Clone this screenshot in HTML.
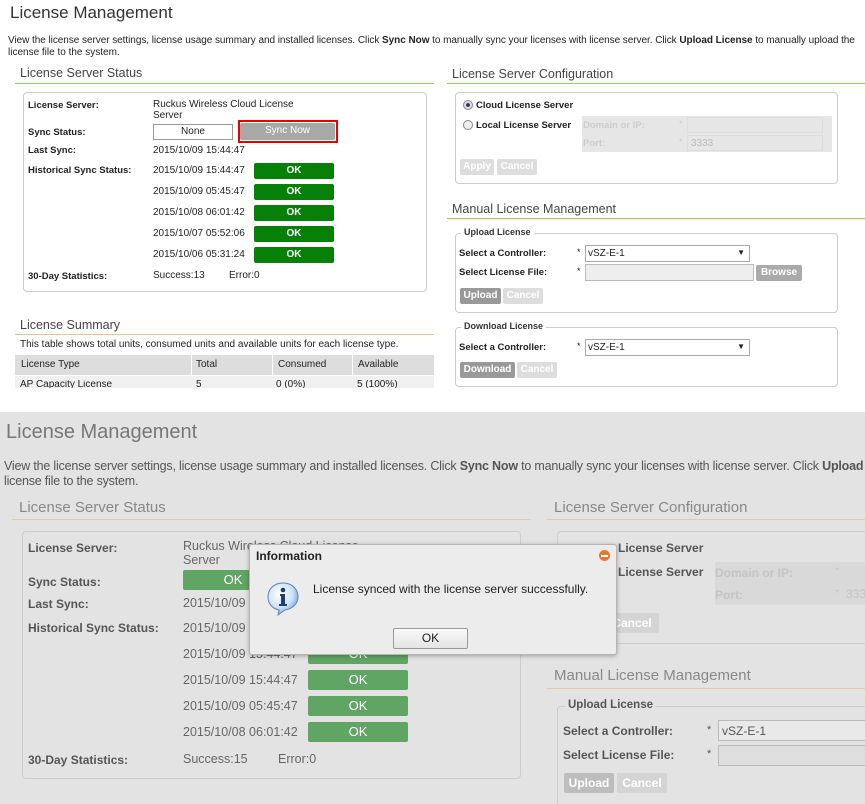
<!DOCTYPE html>
<html><head><meta charset="utf-8"><style>
*{margin:0;padding:0;box-sizing:border-box}
body{width:865px;height:804px;overflow:hidden;background:#fff;font-family:"Liberation Sans",sans-serif;color:#222;position:relative}
.a{position:absolute;white-space:nowrap;line-height:1}
.b{font-weight:bold}
.ok{position:absolute;background:#078007;color:#fff;font-size:10px;font-weight:bold;text-align:center;border-radius:2px}
.btn{position:absolute;color:#fff;font-size:10px;font-weight:bold;text-align:center;border-radius:2px;line-height:16px}
#bot{position:absolute;left:0;top:412px;width:865px;height:392px;background:#e3e3e3;overflow:hidden;color:#444}
#bot .ok{background:#60a563;font-size:13px;font-weight:normal;line-height:20px;height:20px;width:100px}
</style></head><body>
<!-- TOP -->
<div class="a" style="left:10px;top:4px;font-size:17px;color:#333">License Management</div>
<div class="a" style="left:8px;top:36px;font-size:10px;letter-spacing:-0.05px;color:#222">View the license server settings, license usage summary and installed licenses. Click <b>Sync Now</b> to manually sync your licenses with license server. Click <b>Upload License</b> to manually upload the</div>
<div class="a" style="left:8px;top:48px;font-size:10px">license file to the system.</div>

<div class="a" style="left:20px;top:67px;font-size:12.5px;color:#444">License Server Status</div>
<div class="a" style="left:15px;top:83px;width:419px;height:1px;background:#f0a050"></div>
<div class="a" style="left:23px;top:92px;width:404px;height:200px;border:1px solid #ccc;border-radius:4px"></div>
<div class="a b" style="left:28px;top:101px;font-size:9.5px">License Server:</div>
<div class="a" style="left:153px;top:100px;font-size:10px">Ruckus Wireless Cloud License</div>
<div class="a" style="left:153px;top:111px;font-size:10px">Server</div>
<div class="a b" style="left:28px;top:128px;font-size:9.5px">Sync Status:</div>
<div class="a" style="left:153px;top:124px;width:80px;height:16px;border:1px solid #999;font-size:10px;text-align:center;line-height:14px">None</div>
<div class="a" style="left:238px;top:120px;width:100px;height:23px;border:2px solid #e00"></div>
<div class="btn" style="left:240px;top:123px;width:95px;height:17px;background:#a8a8a8;font-weight:normal">Sync Now</div>
<div class="a b" style="left:28px;top:146px;font-size:9.5px">Last Sync:</div>
<div class="a" style="left:153px;top:146px;font-size:10px">2015/10/09 15:44:47</div>
<div class="a b" style="left:28px;top:166px;font-size:9.5px">Historical Sync Status:</div>
<div class="a" style="left:153px;top:166px;font-size:10px">2015/10/09 15:44:47</div>
<div class="a" style="left:153px;top:187px;font-size:10px">2015/10/09 05:45:47</div>
<div class="a" style="left:153px;top:208px;font-size:10px">2015/10/08 06:01:42</div>
<div class="a" style="left:153px;top:229px;font-size:10px">2015/10/07 05:52:06</div>
<div class="a" style="left:153px;top:250px;font-size:10px">2015/10/06 05:31:24</div>
<div class="ok" style="left:254px;top:163px;width:80px;height:16px;line-height:16px">OK</div>
<div class="ok" style="left:254px;top:184px;width:80px;height:16px;line-height:16px">OK</div>
<div class="ok" style="left:254px;top:205px;width:80px;height:16px;line-height:16px">OK</div>
<div class="ok" style="left:254px;top:226px;width:80px;height:16px;line-height:16px">OK</div>
<div class="ok" style="left:254px;top:247px;width:80px;height:16px;line-height:16px">OK</div>
<div class="a b" style="left:28px;top:272px;font-size:9.5px">30-Day Statistics:</div>
<div class="a" style="left:153px;top:271px;font-size:10px">Success:13</div>
<div class="a" style="left:229px;top:271px;font-size:10px">Error:0</div>

<div class="a" style="left:20px;top:319px;font-size:12.5px;color:#444">License Summary</div>
<div class="a" style="left:15px;top:334px;width:419px;height:1px;background:#f5c080"></div>
<div class="a" style="left:20px;top:340px;font-size:10px">This table shows total units, consumed units and available units for each license type.</div>
<div class="a" style="left:15px;top:355px;width:419px;height:20px;background:#ddd"></div>
<div class="a" style="left:15px;top:376px;width:419px;height:12px;background:#f0f0f0;overflow:hidden"></div>
<div class="a" style="left:191px;top:355px;width:1px;height:20px;background:#fff"></div>
<div class="a" style="left:272px;top:355px;width:1px;height:20px;background:#fff"></div>
<div class="a" style="left:352px;top:355px;width:1px;height:20px;background:#fff"></div>
<div class="a" style="left:21px;top:360px;font-size:10px">License Type</div>
<div class="a" style="left:196px;top:360px;font-size:10px">Total</div>
<div class="a" style="left:278px;top:360px;font-size:10px">Consumed</div>
<div class="a" style="left:358px;top:360px;font-size:10px">Available</div>
<div class="a" style="left:20px;top:380px;font-size:10px;height:8px;overflow:hidden">AP Capacity License</div>
<div class="a" style="left:196px;top:380px;font-size:10px;height:8px;overflow:hidden">5</div>
<div class="a" style="left:276px;top:380px;font-size:10px;height:8px;overflow:hidden">0 (0%)</div>
<div class="a" style="left:357px;top:380px;font-size:10px;height:8px;overflow:hidden">5 (100%)</div>

<!-- right top -->
<div class="a" style="left:452px;top:68px;font-size:12.5px;color:#444">License Server Configuration</div>
<div class="a" style="left:447px;top:83px;width:418px;height:1px;background:#f0a050"></div>
<div class="a" style="left:455px;top:92px;width:383px;height:92px;border:1px solid #ccc;border-radius:4px"></div>
<div class="a" style="left:463px;top:100px;width:10px;height:10px;border-radius:50%;border:1px solid #888;background:radial-gradient(#335 30%,#dde 40%)"></div>
<div class="a b" style="left:476px;top:101px;font-size:9.5px">Cloud License Server</div>
<div class="a" style="left:463px;top:120px;width:10px;height:10px;border-radius:50%;border:1px solid #888;background:#eee"></div>
<div class="a b" style="left:476px;top:121px;font-size:9.5px">Local License Server</div>
<div class="a" style="left:582px;top:116px;width:250px;height:36px;background:#e6e6e6"></div>
<div class="a b" style="left:583px;top:121px;font-size:9.5px;color:#ccc">Domain or IP:</div>
<div class="a b" style="left:583px;top:139px;font-size:9.5px;color:#ccc">Port:</div>
<div class="a" style="left:679px;top:120px;font-size:9px;color:#ccc">*</div>
<div class="a" style="left:679px;top:138px;font-size:9px;color:#ccc">*</div>
<div class="a" style="left:687px;top:117px;width:136px;height:16px;border:1px solid #ddd"></div>
<div class="a" style="left:687px;top:135px;width:136px;height:16px;border:1px solid #ddd;font-size:10px;color:#bbb;padding:3px 3px">3333</div>
<div class="btn" style="left:460px;top:159px;width:34px;height:16px;background:#ddd">Apply</div>
<div class="btn" style="left:497px;top:159px;width:40px;height:16px;background:#ddd">Cancel</div>

<div class="a" style="left:452px;top:203px;font-size:12.5px;color:#444">Manual License Management</div>
<div class="a" style="left:447px;top:218px;width:418px;height:1px;background:#f0a050"></div>
<div class="a" style="left:455px;top:233px;width:383px;height:80px;border:1px solid #ccc;border-radius:4px"></div>
<div class="a b" style="left:461px;top:228px;font-size:9px;background:#fff;padding:0 3px;color:#333">Upload License</div>
<div class="a b" style="left:459px;top:249px;font-size:9.5px">Select a Controller:</div>
<div class="a" style="left:577px;top:248px;font-size:9px">*</div>
<div class="a" style="left:585px;top:245px;width:165px;height:17px;border:1px solid #aaa;font-size:10px;padding:3px 2px">vSZ-E-1<span style="position:absolute;right:4px;top:3px;font-size:8px">▼</span></div>
<div class="a b" style="left:459px;top:268px;font-size:9.5px">Select License File:</div>
<div class="a" style="left:577px;top:267px;font-size:9px">*</div>
<div class="a" style="left:585px;top:264px;width:169px;height:17px;border:1px solid #bbb;background:#eee"></div>
<div class="btn" style="left:756px;top:265px;width:46px;height:16px;background:#aaa">Browse</div>
<div class="btn" style="left:460px;top:288px;width:41px;height:16px;background:#999">Upload</div>
<div class="btn" style="left:503px;top:288px;width:40px;height:16px;background:#ddd">Cancel</div>

<div class="a" style="left:455px;top:327px;width:383px;height:60px;border:1px solid #ccc;border-radius:4px"></div>
<div class="a b" style="left:461px;top:322px;font-size:9px;background:#fff;padding:0 3px;color:#333">Download License</div>
<div class="a b" style="left:459px;top:343px;font-size:9.5px">Select a Controller:</div>
<div class="a" style="left:577px;top:342px;font-size:9px">*</div>
<div class="a" style="left:585px;top:339px;width:165px;height:17px;border:1px solid #aaa;font-size:10px;padding:3px 2px">vSZ-E-1<span style="position:absolute;right:4px;top:3px;font-size:8px">▼</span></div>
<div class="btn" style="left:460px;top:362px;width:55px;height:16px;background:#999">Download</div>
<div class="btn" style="left:517px;top:362px;width:40px;height:16px;background:#ddd">Cancel</div>

<!-- BOTTOM -->
<div id="bot">
<div class="a" style="left:6px;top:10px;font-size:20px;color:#777">License Management</div>
<div class="a" style="left:4px;top:48px;font-size:12.5px;letter-spacing:-0.2px;color:#555">View the license server settings, license usage summary and installed licenses. Click <b>Sync Now</b> to manually sync your licenses with license server. Click <b>Upload</b></div>
<div class="a" style="left:4px;top:63px;font-size:12.5px;letter-spacing:-0.2px;color:#555">license file to the system.</div>
<div class="a" style="left:19px;top:88px;font-size:15px;color:#888">License Server Status</div>
<div class="a" style="left:12px;top:107px;width:519px;height:1px;background:#e8c9a0"></div>
<div class="a" style="left:22px;top:119px;width:499px;height:248px;border:1px solid #ccc;border-radius:4px"></div>
<div class="a b" style="left:28px;top:130px;font-size:12px;color:#555">License Server:</div>
<div class="a" style="left:183px;top:128px;font-size:12.5px;color:#666">Ruckus Wireless Cloud License</div>
<div class="a" style="left:183px;top:142px;font-size:12.5px;color:#666">Server</div>
<div class="a b" style="left:28px;top:164px;font-size:12px;color:#555">Sync Status:</div>
<div class="ok" style="left:183px;top:158px">OK</div>
<div class="a b" style="left:28px;top:186px;font-size:12px;color:#555">Last Sync:</div>
<div class="a" style="left:183px;top:185px;font-size:12.5px;color:#666">2015/10/09 15:44:47</div>
<div class="a b" style="left:28px;top:210px;font-size:12px;color:#555">Historical Sync Status:</div>
<div class="a" style="left:183px;top:210px;font-size:12.5px;color:#666">2015/10/09 15:44:47</div>
<div class="a" style="left:183px;top:236px;font-size:12.5px;color:#666">2015/10/09 15:44:47</div>
<div class="ok" style="left:308px;top:232px">OK</div>
<div class="a" style="left:183px;top:262px;font-size:12.5px;color:#666">2015/10/09 15:44:47</div>
<div class="ok" style="left:308px;top:258px">OK</div>
<div class="a" style="left:183px;top:288px;font-size:12.5px;color:#666">2015/10/09 05:45:47</div>
<div class="ok" style="left:308px;top:284px">OK</div>
<div class="a" style="left:183px;top:314px;font-size:12.5px;color:#666">2015/10/08 06:01:42</div>
<div class="ok" style="left:308px;top:310px">OK</div>
<div class="a b" style="left:28px;top:342px;font-size:12px;color:#555">30-Day Statistics:</div>
<div class="a" style="left:183px;top:341px;font-size:12.5px;color:#666">Success:15</div>
<div class="a" style="left:278px;top:341px;font-size:12.5px;color:#666">Error:0</div>

<div class="a" style="left:554px;top:88px;font-size:15px;color:#888">License Server Configuration</div>
<div class="a" style="left:547px;top:107px;width:318px;height:1px;background:#e8c9a0"></div>
<div class="a" style="left:557px;top:119px;width:330px;height:113px;border:1px solid #ccc;border-radius:4px"></div>
<div class="a b" style="left:618px;top:130px;font-size:12px;color:#555">License Server</div>
<div class="a b" style="left:618px;top:154px;font-size:12px;color:#555">License Server</div>
<div class="a" style="left:715px;top:150px;width:150px;height:43px;background:#d9d9d9"></div>
<div class="a b" style="left:715px;top:155px;font-size:12px;color:#c4c4c4">Domain or IP:</div>
<div class="a b" style="left:715px;top:177px;font-size:12px;color:#c4c4c4">Port:</div>
<div class="a" style="left:835px;top:155px;font-size:10px;color:#c4c4c4">*</div>
<div class="a" style="left:835px;top:177px;font-size:10px;color:#c4c4c4">*</div>
<div class="a" style="left:846px;top:176px;font-size:12px;color:#c4c4c4">333</div>
<div class="btn" style="left:605px;top:201px;width:54px;height:20px;background:#d4d4d4;line-height:20px;font-size:12px">Cancel</div>

<div class="a" style="left:554px;top:256px;font-size:15px;color:#888">Manual License Management</div>
<div class="a" style="left:547px;top:276px;width:318px;height:1px;background:#e8c9a0"></div>
<div class="a" style="left:557px;top:294px;width:330px;height:120px;border:1px solid #ccc;border-radius:4px"></div>
<div class="a b" style="left:565px;top:288px;font-size:11.5px;background:#e3e3e3;padding:0 3px;color:#555">Upload License</div>
<div class="a b" style="left:563px;top:313px;font-size:12px;color:#555">Select a Controller:</div>
<div class="a" style="left:707px;top:313px;font-size:11px;color:#555">*</div>
<div class="a" style="left:718px;top:308px;width:160px;height:21px;border:1px solid #bbb;background:#e9e9e9;font-size:12px;padding:4px 3px;color:#555">vSZ-E-1</div>
<div class="a b" style="left:563px;top:337px;font-size:12px;color:#555">Select License File:</div>
<div class="a" style="left:707px;top:337px;font-size:11px;color:#555">*</div>
<div class="a" style="left:718px;top:333px;width:160px;height:21px;border:1px solid #bbb;background:#dedede"></div>
<div class="btn" style="left:564px;top:361px;width:50px;height:20px;background:#bdbdbd;line-height:20px;font-size:12px">Upload</div>
<div class="btn" style="left:617px;top:361px;width:50px;height:20px;background:#d4d4d4;line-height:20px;font-size:12px">Cancel</div>

<!-- dialog -->
<div class="a" style="left:249px;top:132px;width:368px;height:111px;background:#ececec;border:1px solid #b5b5b5;border-radius:3px;box-shadow:0 1px 4px rgba(0,0,0,.3)"></div>
<div class="a b" style="left:256px;top:138px;font-size:12px;color:#222">Information</div>
<div class="a" style="left:599px;top:138px;width:11px;height:11px;border-radius:50%;background:#e87830"><div style="position:absolute;left:2px;top:4.5px;width:7px;height:2px;background:#fff"></div></div>
<svg class="a" style="left:265px;top:168px" width="36" height="36" viewBox="0 0 36 36">
<defs><radialGradient id="g" cx="40%" cy="35%" r="70%"><stop offset="0" stop-color="#fff"/><stop offset="0.6" stop-color="#cfe2f5"/><stop offset="1" stop-color="#6d9ccc"/></radialGradient></defs>
<path d="M18 3 C9 3 3 9 3 17 C3 24 8 29 14 30 L13 35 L20 30 C27 29 33 24 33 17 C33 9 27 3 18 3Z" fill="url(#g)" stroke="#5a87b8" stroke-width="1"/>
<circle cx="18" cy="10" r="2.3" fill="#1a3e80"/>
<path d="M15 14 H20 V24 H22 V26 H14 V24 H16 V16 H15Z" fill="#1a3e80"/>
</svg>
<div class="a" style="left:313px;top:171px;font-size:12px;color:#222">License synced with the license server successfully.</div>
<div class="a" style="left:393px;top:216px;width:75px;height:21px;border:1px solid #999;border-radius:2px;background:linear-gradient(#fafafa,#e4e4e4);font-size:12px;text-align:center;line-height:19px;color:#222">OK</div>
</div>
</body></html>
